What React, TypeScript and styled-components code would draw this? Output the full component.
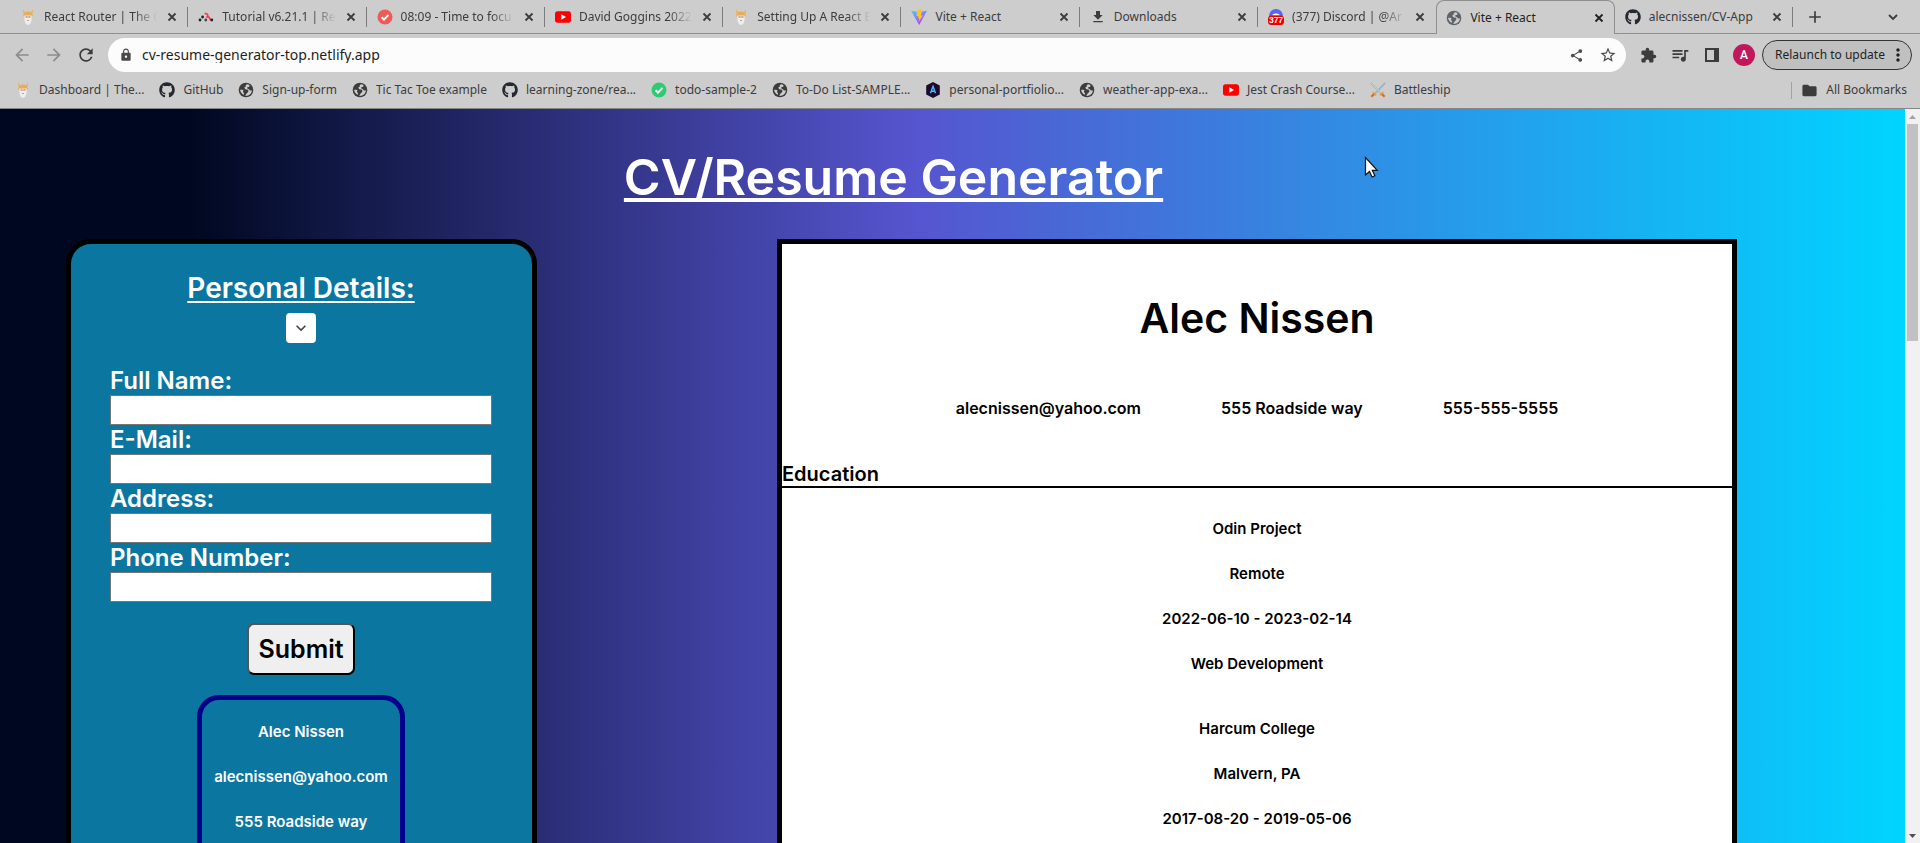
import React from 'react';
import styled, { createGlobalStyle, css } from 'styled-components';
import {
  MdAdd, MdArrowBack, MdArrowForward, MdExpandMore, MdExtension, MdFileDownload, MdFolder,
  MdLock, MdMoreVert, MdQueueMusic, MdRefresh, MdShare, MdStarBorder,
} from 'react-icons/md';
import { FaGithub } from 'react-icons/fa';

const GlobalStyle = createGlobalStyle`
  *, *::before, *::after { box-sizing: border-box; }
  body { margin: 0; background: #cdcdcd; }
  button, input { font: inherit; margin: 0; }
`;

const Shell = styled.div`
  display: flex;
  flex-direction: column;
  height: 100vh;
  overflow: hidden;
`;

/* ---------- Browser chrome ---------- */

const Chrome = styled.header`
  flex: none;
  background: #cdcdcd;
  border-bottom: 1px solid #868686;
  color: #3c3c3c;
  font: 12px/16px 'Noto Sans', sans-serif;
`;

const TabStrip = styled.div`
  display: flex;
  height: 34px;
`;

const StripEdge = styled.div`
  flex: none;
  width: 10px;
  border-bottom: 1px solid #8f8f8f;
`;

const TabList = styled.nav`
  display: flex;
  flex: 1;
  min-width: 0;
`;

const TabItem = styled.div<{ $active?: boolean; $plain?: boolean }>`
  position: relative;
  display: flex;
  align-items: center;
  flex: 1 1 0;
  min-width: 0;
  padding: 0 8px 0 10px;
  border-bottom: 1px solid #8f8f8f;
  ${(p) =>
    p.$active
      ? css`
          padding: 0 7px 0 9px;
          border: 1px solid #8f8f8f;
          border-bottom: 0;
          border-radius: 8px 8px 0 0;
          color: #1f1f1f;
        `
      : !p.$plain &&
        css`
          &::after {
            content: '';
            position: absolute;
            right: 0;
            top: 7px;
            width: 1px;
            height: 20px;
            background: #7c7c7c;
          }
        `}
`;

const TabTitle = styled.button<{ $fade?: boolean }>`
  flex: 1;
  min-width: 0;
  margin: 0 2px 0 8px;
  padding: 0;
  border: 0;
  background: none;
  color: inherit;
  text-align: left;
  white-space: nowrap;
  overflow: hidden;
  ${(p) => p.$fade && css`mask-image: linear-gradient(90deg, #000 76%, transparent 96%);`}
`;

const IconButton = styled.button<{ $size?: number; $dim?: boolean }>`
  display: flex;
  align-items: center;
  justify-content: center;
  flex: none;
  width: ${(p) => p.$size ?? 32}px;
  height: ${(p) => p.$size ?? 32}px;
  padding: 0;
  border: 0;
  background: none;
  color: ${(p) => (p.$dim ? '#8c8c8c' : 'inherit')};
`;

const StripActions = styled.div`
  display: flex;
  justify-content: space-between;
  flex: none;
  width: 127px;
  padding: 1px 11px 0 6px;
  border-bottom: 1px solid #8f8f8f;
`;

const Toolbar = styled.div`
  display: flex;
  align-items: center;
  height: 42px;
  padding: 0 8px 0 6px;
`;

const AddressBar = styled.label`
  display: flex;
  align-items: center;
  flex: 1;
  min-width: 0;
  height: 34px;
  margin: 0 6px;
  padding: 0 2px 0 11px;
  border-radius: 17px;
  background: #fcfcfc;
  color: #4a4a4a;
`;

const AddressInput = styled.input`
  flex: 1;
  min-width: 0;
  padding: 0 0 0 9px;
  border: 0;
  outline: 0;
  background: none;
  color: #1f1f1f;
  font-size: 14px;
`;

const Avatar = styled.button`
  flex: none;
  width: 22px;
  height: 22px;
  margin: 0 7px 0 5px;
  padding: 0;
  border: 0;
  border-radius: 50%;
  background: #c2185b;
  color: #fff;
  font: 500 12px/22px Roboto, sans-serif;
`;

const Relaunch = styled.button`
  display: flex;
  align-items: center;
  justify-content: space-between;
  flex: none;
  width: 150px;
  height: 30px;
  padding: 0 3px 0 12px;
  border: 1px solid #333;
  border-radius: 15px;
  background: #c0c0c0;
  color: #1f1f1f;
  white-space: nowrap;
`;

const Bookmarks = styled.nav`
  display: flex;
  align-items: center;
  gap: 15px;
  height: 32px;
  padding: 0 13px 4px 15px;
`;

const Bookmark = styled.a<{ $last?: boolean }>`
  display: flex;
  align-items: center;
  flex: none;
  gap: 8px;
  color: inherit;
  text-decoration: none;
  white-space: nowrap;
  ${(p) =>
    p.$last &&
    css`
      margin-left: auto;
      padding-left: 9px;
      border-left: 1px solid #a2a2a2;
    `}
`;

/* ---------- Page ---------- */

const Viewport = styled.div`
  display: flex;
  flex: 1;
  min-height: 0;
`;

const Page = styled.main`
  position: relative;
  flex: 1;
  min-width: 0;
  overflow: hidden;
  background: linear-gradient(90deg, #000821 0%, #000821 10%, #5655cf 48%, #00d4ff 100%);
  color: #fff;
  font-family: Inter, sans-serif;
  font-weight: 600;
`;

const PageTitle = styled.h1`
  margin: 0;
  padding: 37px 118px 31px 0;
  font-size: 50px;
  font-weight: 600;
  line-height: 62px;
  text-align: center;
  text-decoration: underline;
  text-decoration-thickness: 4px;
  text-underline-offset: 3px;
  text-decoration-skip-ink: none;
`;

const Columns = styled.div`
  display: grid;
  grid-template-columns: minmax(0, 471fr) minmax(0, 960fr);
  column-gap: 240px;
  padding: 0 168px 0 66px;
`;

const Card = styled.section`
  display: flex;
  flex-direction: column;
  align-items: center;
  padding: 24px 40px 24px 39px;
  border: 5px solid #000;
  border-radius: 25px;
  background: #0b76a0;
`;

const CardTitle = styled.h2`
  margin: 0 0 5px;
  font-size: 28px;
  font-weight: 600;
  line-height: 40px;
  text-decoration: underline;
  text-decoration-thickness: 2px;
  text-underline-offset: 3px;
  text-decoration-skip-ink: none;
`;

const Toggle = styled(IconButton)`
  border-radius: 4px;
  background: #fff;
  color: #444;
`;

const Form = styled.form`
  display: flex;
  flex-direction: column;
  align-items: center;
  align-self: stretch;
  padding-top: 23px;
`;

const Field = styled.label`
  display: block;
  width: 100%;
  font-size: 24px;
  line-height: 29px;
`;

const FieldInput = styled.input`
  display: block;
  width: 100%;
  height: 30px;
  padding: 1px 2px;
  border: 1px solid #767676;
  border-radius: 0;
  background: #fff;
`;

const Submit = styled.button`
  height: 52px;
  margin: 21px 0 20px;
  padding: 0 9px;
  border: 2px outset #555;
  border-radius: 7px;
  background: #efefef;
  color: #000;
  font-size: 25px;
`;

const Summary = styled.div`
  height: 240px;
  padding: 23px 12px;
  border: 5px solid #00008b;
  border-radius: 22px;
  text-align: center;
`;

const Line = styled.p`
  margin: 0 0 27px;
  font-size: 15px;
  line-height: 18px;
`;

const Resume = styled.article`
  height: 1200px;
  border: 5px solid #000;
  background: #fff;
  color: #000;
  text-align: center;
`;

const ResumeName = styled.h2`
  margin: 0;
  padding: 48px 0;
  font-size: 41px;
  font-weight: 600;
  line-height: 52px;
`;

const Contacts = styled.ul`
  display: flex;
  justify-content: center;
  gap: 80px;
  margin: 0;
  padding: 6px 0 44px;
  list-style: none;
  font-size: 16px;
  line-height: 20px;
`;

const SectionTitle = styled.h3`
  margin: 0;
  border-bottom: 2px solid #000;
  font-size: 20px;
  font-weight: 600;
  line-height: 24px;
  text-align: left;
`;

const Entry = styled.div`
  padding-top: 32px;
  & + & {
    padding-top: 20px;
  }
`;

const ScrollTrack = styled.div`
  display: flex;
  flex-direction: column;
  align-items: center;
  flex: none;
  width: 15px;
  background: #f1f1f1;
`;

const ScrollThumb = styled.div`
  width: 11px;
  height: 217px;
  margin-bottom: auto;
  background: #c1c1c1;
`;

const Cursor = styled.svg`
  position: absolute;
  left: 1364px;
  top: 47px;
`;

/* ---------- Drawings ---------- */

const Drawing = styled.svg`
  flex: none;
`;

const Icon = ({ children, size = 16, box = '0 0 16 16' }: { children: React.ReactNode; size?: number; box?: string }) => (
  <Drawing width={size} height={size} viewBox={box} aria-hidden="true">{children}</Drawing>
);

const Cross = () => (
  <Icon><path d="m4.500 4.500 7 7M11.500 4.500l-7 7" stroke="currentColor" strokeWidth="1.800" /></Icon>
);

const Odin = () => (
  <Icon>
    <path d="M3.6 0C2.3 3 3 5 5 5.4L6 3.2C4.500 3 3.700 2 3.600 0ZM12.400 0c1.300 3 .6 5-1.400 5.400L10 3.200C11.500 3 12.300 2 12.400 0Z" fill="#e9b45c" />
    <path d="M3 7.400C3.600 4 5.500 2.600 8 2.600S12.400 4 13 7.400L8 7Z" fill="#e9ac58" />
    <path d="M4.400 6.500h7.200v3c0 4-1.600 6.300-3.600 6.500-2-.2-3.600-2.500-3.600-6.500Z" fill="#f0eeec" />
    <path d="M5.300 6.700h5.400v2.300H5.300Z" fill="#e0c0a8" />
    <path d="M6 7.800h1M9 7.800h1M7 11.500h2" stroke="#a09490" strokeWidth=".8" />
  </Icon>
);

const Router = () => (
  <Icon>
    <path d="M6.500 4.600h1.800c1.900 0 1.900 3.200 0 3.200 M8.500 8h2c1.400 0 1 3 2.600 3" fill="none" stroke="#f44250" strokeWidth="1.800" />
    <circle cx="4.600" cy="8" r="1.400" fill="#222" /><circle cx="2" cy="11" r="1.400" fill="#222" />
    <circle cx="7.800" cy="11" r="1.400" fill="#444" /><circle cx="13.800" cy="11" r="1.400" fill="#222" />
  </Icon>
);

const Check = ({ color }: { color: string }) => (
  <Icon>
    <circle cx="8" cy="8" r="7.500" fill={color} />
    <path d="m4.600 8.200 2.400 2.400 4.500-4.700" fill="none" stroke="#fff" strokeWidth="2" />
  </Icon>
);

const YouTube = () => (
  <Icon><rect y="2.300" width="16" height="11.400" rx="2.600" fill="#f00" /><path d="m6.300 5.300 4.700 2.700-4.700 2.700Z" fill="#fff" /></Icon>
);

const Vite = () => (
  <Icon>
    <defs>
      <linearGradient id="vite" x1="0" y1="0" x2=".6" y2="1"><stop stopColor="#41d1ff" /><stop offset="1" stopColor="#bd34fe" /></linearGradient>
    </defs>
    <path d="M0 1.700 8 3l8-1.300L8.200 16Z" fill="url(#vite)" />
    <path d="M11.500 0 6 1.200 5.500 7.300 7.400 7 6.900 9.400l1.500-.4-.8 4L12 6.300l-2.200.4L11.500 0Z" fill="#ffc51e" />
  </Icon>
);

const Discord = () => (
  <Icon>
    <circle cx="8" cy="7" r="7" fill="#5865f2" />
    <path d="M4.500 5.400c2-1.200 5-1.200 7 0v1h-7Z" fill="#fff" />
    <rect y="6.400" width="16" height="9.600" rx="3.500" fill="#e00" />
    <text x="8" y="14.300" textAnchor="middle" fill="#fff" fontSize="8.500" fontWeight="700" fontFamily="Liberation Sans, sans-serif">377</text>
  </Icon>
);

const Globe = ({ color = '#3c3c3c' }: { color?: string }) => (
  <Icon>
    <circle cx="8" cy="8" r="7.300" fill={color} />
    <path d="M9.300 2.200C7.500 2.600 7.300 4 8.300 4.600c-1.800 0-2.500 1.300-1.200 2.300 1 .8 3.600.1 3.300 2.300-.2 1.500-1.800 1.700-2.300 3.100-.2.600-.5 1.100-.8 1.600 3.600.2 6.500-2.400 6.600-5.700-1 .7-2.400.4-2.700-.6-.3-1.100-2.200-.6-2.100-1.700.1-.8 1.500-.6 2.200-1.300.5-.5.200-1.200-.3-1.800ZM2.100 7.700c.3 2.300 1.600 4.200 3.700 5l.3-1.300c-.2-.7-1.200-1-1.100-2 .1-.8.800-.9.500-1.300-.7-.4-2.300-.4-3.400-.4Z" fill="#cdcdcd" />
  </Icon>
);

const Hexagon = () => (
  <Icon>
    <path d="m8 0 6.800 3.600v8.800L8 16l-6.800-3.600V3.600Z" fill="#1b0b2b" />
    <path d="m5.500 11.300 2.500-7 2.500 7M6.300 9.300h3.400" fill="none" stroke="#4db8ff" strokeWidth="1.400" />
  </Icon>
);

const Swords = () => (
  <Icon>
    <path d="m.8.800 10.700 11.400M15.200.8 4.500 12.200" stroke="#9db4bd" strokeWidth="1.800" />
    <path d="m1 .8 10 10.700" stroke="#d7e2e5" strokeWidth=".7" />
    <path d="m9.800 13.300 3.500-3.300M6.200 13.300 2.700 10" stroke="#e4a13c" strokeWidth="1.600" />
    <path d="m12 12 2.600 2.800M4 12l-2.600 2.800" stroke="#d96a2c" strokeWidth="2.200" />
  </Icon>
);

const SidePanel = () => (
  <Icon><path d="M2 2h12v12H2Z" fill="none" stroke="#3c3c3c" strokeWidth="2" /><path d="M10 1h5v14h-5Z" fill="#3c3c3c" /></Icon>
);

const Chevron = () => (
  <Icon><path d="m4 6 4 4 4-4" fill="none" stroke="currentColor" strokeWidth="1.800" /></Icon>
);

const Github = () => <FaGithub size={16} color="#24292f" />;

const ScrollArrow = ({ down }: { down?: boolean }) => (
  <Icon size={15} box="0 0 15 15">
    <path d={down ? 'M4 6h7L7.500 10Z' : 'M4 10h7L7.500 6Z'} fill={down ? '#505050' : '#a3a3a3'} />
  </Icon>
);

/* ---------- Data ---------- */

type Tab = { title: string; icon: React.ReactNode; fade?: boolean; active?: boolean; plain?: boolean };

const tabs: Tab[] = [
  { title: 'React Router | The O', icon: <Odin />, fade: true },
  { title: 'Tutorial v6.21.1 | Re', icon: <Router />, fade: true },
  { title: '08:09 - Time to focu', icon: <Check color="#ee5a56" />, fade: true },
  { title: 'David Goggins 2022', icon: <YouTube />, fade: true },
  { title: 'Setting Up A React E', icon: <Odin />, fade: true },
  { title: 'Vite + React', icon: <Vite /> },
  { title: 'Downloads', icon: <MdFileDownload size={16} /> },
  { title: '(377) Discord | @Ar', icon: <Discord />, fade: true, plain: true },
  { title: 'Vite + React', icon: <Globe color="#5f6368" />, active: true },
  { title: 'alecnissen/CV-App', icon: <Github /> },
];

const bookmarks = [
  { title: 'Dashboard | The...', icon: <Odin /> },
  { title: 'GitHub', icon: <Github /> },
  { title: 'Sign-up-form', icon: <Globe /> },
  { title: 'Tic Tac Toe example', icon: <Globe /> },
  { title: 'learning-zone/rea...', icon: <Github /> },
  { title: 'todo-sample-2', icon: <Check color="#2ecc71" /> },
  { title: 'To-Do List-SAMPLE...', icon: <Globe /> },
  { title: 'personal-portfiolio...', icon: <Hexagon /> },
  { title: 'weather-app-exa...', icon: <Globe /> },
  { title: 'Jest Crash Course...', icon: <YouTube /> },
  { title: 'Battleship', icon: <Swords /> },
];

const fields = ['Full Name:', 'E-Mail:', 'Address:', 'Phone Number:'];

const education = [
  ['Odin Project', 'Remote', '2022-06-10 - 2023-02-14', 'Web Development'],
  ['Harcum College', 'Malvern, PA', '2017-08-20 - 2019-05-06'],
];

export default function App() {
  return (
    <Shell>
      <GlobalStyle />
      <Chrome>
        <TabStrip>
          <StripEdge />
          <TabList>
            {tabs.map((t, i) => (
              <TabItem key={i} $active={t.active} $plain={t.plain}>
                {t.icon}
                <TabTitle type="button" $fade={t.fade}>{t.title}</TabTitle>
                <IconButton type="button" $size={16} aria-label="Close tab"><Cross /></IconButton>
              </TabItem>
            ))}
          </TabList>
          <StripActions>
            <IconButton type="button" aria-label="New tab"><MdAdd size={20} /></IconButton>
            <IconButton type="button" aria-label="Search tabs"><Chevron /></IconButton>
          </StripActions>
        </TabStrip>
        <Toolbar>
          <IconButton type="button" $dim aria-label="Back"><MdArrowBack size={20} /></IconButton>
          <IconButton type="button" $dim aria-label="Forward"><MdArrowForward size={20} /></IconButton>
          <IconButton type="button" aria-label="Reload"><MdRefresh size={20} /></IconButton>
          <AddressBar>
            <MdLock size={14} aria-hidden="true" />
            <AddressInput type="text" aria-label="Address" defaultValue="cv-resume-generator-top.netlify.app" />
            <IconButton type="button" aria-label="Share"><MdShare size={15} /></IconButton>
            <IconButton type="button" aria-label="Bookmark this page"><MdStarBorder size={18} /></IconButton>
          </AddressBar>
          <IconButton type="button" aria-label="Extensions"><MdExtension size={17} /></IconButton>
          <IconButton type="button" aria-label="Media"><MdQueueMusic size={20} /></IconButton>
          <IconButton type="button" aria-label="Side panel"><SidePanel /></IconButton>
          <Avatar type="button">A</Avatar>
          <Relaunch type="button">Relaunch to update<MdMoreVert size={20} /></Relaunch>
        </Toolbar>
        <Bookmarks>
          {bookmarks.map((b) => (
            <Bookmark key={b.title} href="#">{b.icon}{b.title}</Bookmark>
          ))}
          <Bookmark href="#" $last><MdFolder size={17} />All Bookmarks</Bookmark>
        </Bookmarks>
      </Chrome>
      <Viewport>
        <Page>
          <PageTitle>CV/Resume Generator</PageTitle>
          <Columns>
            <Card>
              <CardTitle>Personal Details:</CardTitle>
              <Toggle type="button" $size={30} aria-label="Toggle personal details"><MdExpandMore size={20} /></Toggle>
              <Form onSubmit={(e) => e.preventDefault()}>
                {fields.map((f) => (
                  <Field key={f}>{f}<FieldInput type="text" /></Field>
                ))}
                <Submit type="submit">Submit</Submit>
              </Form>
              <Summary>
                <Line>Alec Nissen</Line>
                <Line>alecnissen@yahoo.com</Line>
                <Line>555 Roadside way</Line>
              </Summary>
            </Card>
            <Resume>
              <ResumeName>Alec Nissen</ResumeName>
              <Contacts>
                <li>alecnissen@yahoo.com</li>
                <li>555 Roadside way</li>
                <li>555-555-5555</li>
              </Contacts>
              <SectionTitle>Education</SectionTitle>
              {education.map((lines) => (
                <Entry key={lines[0]}>
                  {lines.map((l) => <Line key={l}>{l}</Line>)}
                </Entry>
              ))}
            </Resume>
          </Columns>
          <Cursor width="18" height="25" viewBox="0 0 18 25" aria-hidden="true">
            <path d="M1.500 1.500v17.500l4-3.500 2.600 5.500 2.800-1.300-2.600-5.300h5Z" fill="#fff" stroke="#111" strokeWidth="1.200" />
          </Cursor>
        </Page>
        <ScrollTrack>
          <ScrollArrow />
          <ScrollThumb />
          <ScrollArrow down />
        </ScrollTrack>
      </Viewport>
    </Shell>
  );
}
